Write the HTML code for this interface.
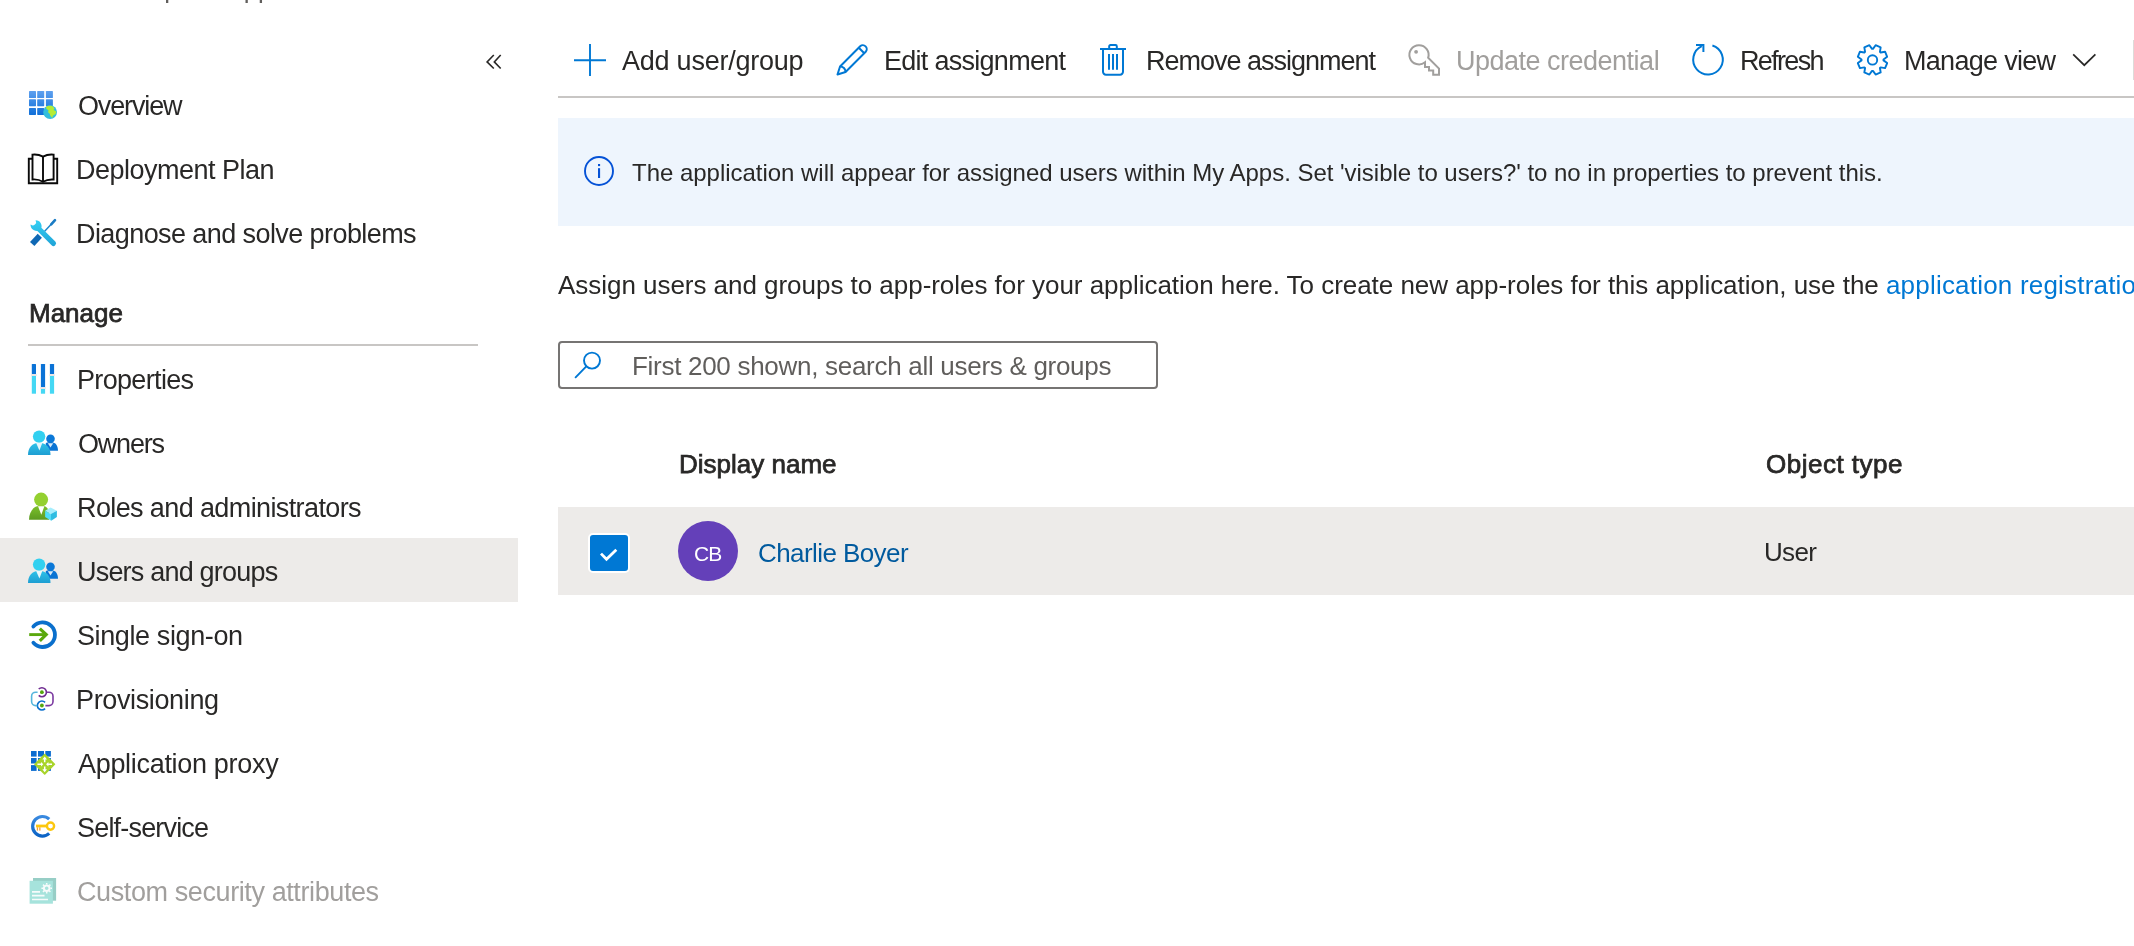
<!DOCTYPE html>
<html><head><meta charset="utf-8">
<style>
html,body{margin:0;padding:0;background:#fff;width:2134px;height:946px;overflow:hidden;position:relative;font-family:"Liberation Sans",sans-serif;color:#292827}
.t{position:absolute;white-space:nowrap;line-height:1;will-change:transform}
.s28{font-size:27px}
.s26{font-size:26px}
.b{font-weight:normal;-webkit-text-stroke:0.75px currentColor}
.ic{position:absolute}
</style></head><body>

<!-- top cut-off title -->
<div class="t s28" id="title" style="left:102px;top:-24px;color:#605e5c;font-size:26px">Enterprise Application</div>

<!-- collapse -->
<svg class="ic" style="left:480px;top:50px" width="30" height="24" viewBox="480 50 30 24"><path d="M493.8 55 L487.1 61.9 L493.8 68.5 M500.7 55 L494.3 61.9 L500.7 68.5" fill="none" stroke="#292827" stroke-width="1.6"/></svg>

<!-- sidebar selection -->
<div style="position:absolute;left:0;top:538px;width:518px;height:64px;background:#edebe9"></div>
<div style="position:absolute;left:28px;top:344px;width:450px;height:2px;background:#c8c6c4"></div>

<div class="t s28" id="n1" style="left:78px;top:93px;letter-spacing:-1.139px">Overview</div>
<div class="t s28" id="n2" style="left:76px;top:157px;letter-spacing:-0.499px">Deployment Plan</div>
<div class="t s28" id="n3" style="left:76px;top:221px;letter-spacing:-0.582px">Diagnose and solve problems</div>
<div class="t s26 b" id="n4" style="left:29px;top:300px;letter-spacing:0.000px">Manage</div>
<div class="t s28" id="n5" style="left:77px;top:367px;letter-spacing:-0.665px">Properties</div>
<div class="t s28" id="n6" style="left:78px;top:431px;letter-spacing:-1.200px">Owners</div>
<div class="t s28" id="n7" style="left:77px;top:495px;letter-spacing:-0.612px">Roles and administrators</div>
<div class="t s28" id="n8" style="left:77px;top:559px;letter-spacing:-0.797px">Users and groups</div>
<div class="t s28" id="n9" style="left:77px;top:623px;letter-spacing:-0.388px">Single sign-on</div>
<div class="t s28" id="n10" style="left:76px;top:687px;letter-spacing:-0.365px">Provisioning</div>
<div class="t s28" id="n11" style="left:78px;top:751px;letter-spacing:-0.310px">Application proxy</div>
<div class="t s28" id="n12" style="left:77px;top:815px;letter-spacing:-0.815px">Self-service</div>
<div class="t s28" id="n13" style="left:77px;top:879px;color:#a19f9d;letter-spacing:-0.400px">Custom security attributes</div>

<!-- toolbar -->
<div class="t s28" id="tb1" style="left:622px;top:48px;letter-spacing:-0.232px">Add user/group</div>
<div class="t s28" id="tb2" style="left:884px;top:48px;letter-spacing:-0.719px">Edit assignment</div>
<div class="t s28" id="tb3" style="left:1146px;top:48px;letter-spacing:-1.005px">Remove assignment</div>
<div class="t s28" id="tb4" style="left:1456px;top:48px;color:#a19f9d;letter-spacing:-0.500px">Update credential</div>
<div class="t s28" id="tb5" style="left:1740px;top:48px;letter-spacing:-1.663px">Refresh</div>
<div class="t s28" id="tb6" style="left:1904px;top:48px;letter-spacing:-0.700px">Manage view</div>
<div style="position:absolute;left:2133px;top:40px;width:1px;height:40px;background:#dddbd9"></div>
<div style="position:absolute;left:558px;top:96px;width:1576px;height:2px;background:#c8c6c4"></div>

<!-- info bar -->
<div style="position:absolute;left:558px;top:118px;width:1576px;height:108px;background:#eef5fd"></div>
<div class="t s26" id="info" style="left:632px;top:161px;font-size:24px;letter-spacing:-0.025px">The application will appear for assigned users within My Apps. Set 'visible to users?' to no in properties to prevent this.</div>

<div class="t s26" id="para" style="left:558px;top:272px;letter-spacing:-0.035px"><span id="para1">Assign users and groups to app-roles for your application here. To create new app-roles for this application, use the</span> <span id="para2" style="color:#0078d4;letter-spacing:0.2px">application registration</span></div>

<!-- search -->
<div style="position:absolute;left:558px;top:341px;width:596px;height:44px;border:2px solid #767473;border-radius:4px"></div>
<div class="t s26" id="search" style="left:632px;top:353px;color:#605e5c;letter-spacing:-0.290px">First 200 shown, search all users &amp; groups</div>

<!-- table -->
<div class="t s26 b" id="h1" style="left:679px;top:451px;letter-spacing:-0.001px">Display name</div>
<div class="t s26 b" id="h2" style="left:1766px;top:451px;letter-spacing:0.500px">Object type</div>
<div style="position:absolute;left:558px;top:507px;width:1576px;height:88px;background:#edebe9"></div>
<div style="position:absolute;left:588px;top:533px;width:38px;height:36px;border:2px solid #fff;border-radius:5px;background:#0078d4"></div>
<div style="position:absolute;left:678px;top:521px;width:60px;height:60px;border-radius:50%;background:#6440b9"></div>
<div class="t" id="cb" style="left:694px;top:543px;font-size:21px;color:#fff;letter-spacing:-1.000px">CB</div>
<div class="t s26" id="name" style="left:758px;top:540px;color:#005a9e;letter-spacing:-0.580px">Charlie Boyer</div>
<div class="t s26" id="user" style="left:1764px;top:539px;letter-spacing:-0.667px">User</div>

<!-- icons -->
<svg class="ic" style="left:570px;top:40px" width="40" height="40" viewBox="570 40 40 40"><path d="M574 60.3H606M590 44V76" stroke="#0078d4" stroke-width="1.9" fill="none"/></svg>
<svg class="ic" style="left:830px;top:40px" width="45" height="40" viewBox="830 40 45 40"><g fill="none" stroke="#0078d4" stroke-width="2" stroke-linejoin="round"><path d="M837.5 74.5 L840.05 66.44 L860.2 46.29 A3.9 3.9 0 0 1 865.71 51.8 L845.56 71.95 Z"/><path d="M858.78 47.7 L864.3 53.22"/><path d="M840.05 66.44 A5.5 5.5 0 0 1 845.56 71.95"/></g></svg>
<svg class="ic" style="left:1095px;top:40px" width="36" height="40" viewBox="1095 40 36 40"><g fill="none" stroke="#0078d4" stroke-width="2"><path d="M1100 49H1126"/><path d="M1109.2 49V46.2A1.2 1.2 0 0 1 1110.4 45H1115.6A1.2 1.2 0 0 1 1116.8 46.2V49"/><path d="M1103 49V71.5A3 3 0 0 0 1106 74.7H1120A3 3 0 0 0 1123 71.5V49"/><path d="M1109 54V69.8M1113 54V69.8M1117 54V69.8"/></g></svg>
<svg class="ic" style="left:1403px;top:40px" width="42" height="40" viewBox="1403 40 42 40"><g fill="none" stroke="#a19f9d" stroke-width="2" stroke-linejoin="miter"><path d="M1428.14 57.74 A9.6 9.6 0 1 0 1425 62.29 L1425 66.9 L1429 66.9 L1429 70.5 L1433.2 70.5 L1433.2 74.8 L1439 74.8 L1439 68.6 Z"/></g><circle cx="1416.1" cy="51.8" r="1.9" fill="#a19f9d"/></svg>
<svg class="ic" style="left:1686px;top:40px" width="42" height="40" viewBox="1686 40 42 40"><g fill="none" stroke="#0078d4" stroke-width="2"><path d="M1712.4 45.5 A14.8 14.8 0 1 1 1701.8 46.2"/><path d="M1696 45H1703.4V52"/></g></svg>
<svg class="ic" style="left:1852px;top:40px" width="42" height="40" viewBox="1852 40 42 40"><g fill="none" stroke="#0078d4" stroke-width="1.9" stroke-linejoin="round"><path d="M1872.98 48.91 L1875.62 45.23 L1880.67 47.32 L1879.93 51.79 L1880.61 52.47 L1885.08 51.73 L1887.17 56.78 L1883.49 59.42 L1883.49 60.38 L1887.17 63.02 L1885.08 68.07 L1880.61 67.33 L1879.93 68.01 L1880.67 72.48 L1875.62 74.57 L1872.98 70.89 L1872.02 70.89 L1869.38 74.57 L1864.33 72.48 L1865.07 68.01 L1864.39 67.33 L1859.92 68.07 L1857.83 63.02 L1861.51 60.38 L1861.51 59.42 L1857.83 56.78 L1859.92 51.73 L1864.39 52.47 L1865.07 51.79 L1864.33 47.32 L1869.38 45.23 L1872.02 48.91 Z"/><circle cx="1872.5" cy="59.9" r="4.7"/></g></svg>
<svg class="ic" style="left:2064px;top:40px" width="40" height="40" viewBox="2064 40 40 40"><path d="M2073.2 54.3 L2084.3 65.2 L2095.4 54.3" fill="none" stroke="#292827" stroke-width="1.7"/></svg>
<svg class="ic" style="left:580px;top:150px" width="40" height="42" viewBox="580 150 40 42"><circle cx="599" cy="171" r="14" fill="none" stroke="#0552d6" stroke-width="1.9"/><rect x="598" y="164" width="2.1" height="2.1" fill="#0552d6"/><rect x="598" y="168.2" width="2.1" height="9.8" fill="#0552d6"/></svg>
<svg class="ic" style="left:570px;top:345px" width="40" height="40" viewBox="570 345 40 40"><g fill="none" stroke="#0078d4" stroke-width="1.9" stroke-linecap="round"><circle cx="592" cy="360.6" r="8"/><path d="M586.3 366.4 L575.6 377.3"/></g></svg>
<svg class="ic" style="left:590px;top:535px" width="40" height="40" viewBox="590 535 40 40"><path d="M601 553.6 L606.5 559.3 L616.3 549.8" fill="none" stroke="#fff" stroke-width="2.8"/></svg>
<svg class="ic" style="left:24px;top:86px" width="38" height="38" viewBox="24 86 38 38"><defs><linearGradient id="gov" gradientUnits="userSpaceOnUse" x1="0" y1="91" x2="0" y2="115"><stop offset="0" stop-color="#5ea0ef"/><stop offset="1" stop-color="#0f6fd8"/></linearGradient></defs><rect x="29" y="91" width="7" height="7" rx="0.6" fill="url(#gov)"/><rect x="29" y="99.2" width="7" height="7" rx="0.6" fill="url(#gov)"/><rect x="29" y="107.9" width="7" height="7" rx="0.6" fill="url(#gov)"/><rect x="37.2" y="91" width="7" height="7" rx="0.6" fill="url(#gov)"/><rect x="37.2" y="99.2" width="7" height="7" rx="0.6" fill="url(#gov)"/><rect x="37.2" y="107.9" width="7" height="7" rx="0.6" fill="url(#gov)"/><rect x="45.9" y="91" width="7" height="7" rx="0.6" fill="url(#gov)"/><rect x="45.9" y="99.2" width="7" height="7" rx="0.6" fill="url(#gov)"/><rect x="45.9" y="107.9" width="7" height="7" rx="0.6" fill="url(#gov)"/><clipPath id="globe"><circle cx="50.1" cy="112.1" r="6.9"/></clipPath><circle cx="50.1" cy="112.1" r="6.9" fill="#32bedd"/><path clip-path="url(#globe)" d="M45.9 106.9 L48.1 105.6 L52.1 105.8 L54.5 108.3 L53.6 110.1 L56.4 111.5 L55.6 114.1 L52.9 115.7 L52.3 117.9 L50.5 115.9 L49.7 113.7 L48.1 112.3 L48.5 110.3 L46.5 109 Z" fill="#b4ec36"/></svg>
<svg class="ic" style="left:24px;top:150px" width="38" height="38" viewBox="24 150 38 38"><g fill="none" stroke="#0a0a0a" stroke-width="1.9"><path d="M32.5 158.8H28.8V183.2H57.2V158.8H53.6"/><path d="M32.5 154.6 C36 154.2 40 155 43 156.6 C46 155 50 154.2 53.6 154.6 V179.5 C50 179.2 46 180 43 181.8 C40 180 36 179.2 32.5 179.5 Z"/><path d="M43 156.6V181.8"/></g></svg>
<svg class="ic" style="left:24px;top:214px" width="38" height="38" viewBox="24 214 38 38"><defs><linearGradient id="gwr" gradientUnits="userSpaceOnUse" x1="0" y1="220" x2="0" y2="247"><stop offset="0" stop-color="#35d0f4"/><stop offset="1" stop-color="#1ea2d6"/></linearGradient></defs><path d="M44.4 231.4 L55.2 220" stroke="#1b86cc" stroke-width="1.5" fill="none"/><path d="M51.2 224.3 L55 220.2" stroke="#1b7cc4" stroke-width="2.6" stroke-linecap="round" fill="none"/><path d="M30 242.1 L37.7 233.7 L41.9 237.8 L34.4 246.1 Z" fill="#0f68b4"/><path d="M35.6 220.2 A3.4 3.4 0 0 1 30.6 224.6 C30.2 227.2 32.6 231.2 37.4 231 L51.6 245.2 A2.55 2.55 0 0 0 55.3 241.6 L41.4 227.8 C42.4 224.8 40.4 220.2 35.6 220.2 Z" fill="url(#gwr)"/></svg>
<svg class="ic" style="left:24px;top:360px" width="38" height="38" viewBox="24 360 38 38"><rect x="31.8" y="364" width="4.2" height="10" rx="0.5" fill="#0a72d6"/><rect x="31.8" y="376" width="4.2" height="17.7" fill="#45d8f4"/><rect x="31.2" y="374" width="5.4" height="2" fill="#eae4e4"/><rect x="40.9" y="364" width="4.2" height="23" rx="0.5" fill="#0a72d6"/><rect x="40.9" y="389" width="4.2" height="4.699999999999999" fill="#45d8f4"/><rect x="40.3" y="387" width="5.4" height="2" fill="#eae4e4"/><rect x="49.9" y="364" width="4.2" height="10" rx="0.5" fill="#0a72d6"/><rect x="49.9" y="376" width="4.2" height="17.7" fill="#45d8f4"/><rect x="49.3" y="374" width="5.4" height="2" fill="#eae4e4"/></svg>
<svg class="ic" style="left:24px;top:425px" width="38" height="38" viewBox="24 425 38 38"><defs><linearGradient id="gp1" gradientUnits="userSpaceOnUse" x1="0" y1="442" x2="0" y2="455"><stop offset="0" stop-color="#30c4ea"/><stop offset="1" stop-color="#1e9ed2"/></linearGradient></defs><path d="M45.8 443 C49 441.6 53 441.6 55.4 443.6 C57.2 445.4 58 448 58 450.8 H45.8 Z" fill="#0a74d4"/><circle cx="50.5" cy="438.7" r="4.3" fill="#0a78d8"/><path d="M47.8 443.2 L53.2 443.2 L50.5 447.6 Z" fill="#d6eaf8"/><path d="M28 454.9 C28 448 32 442.8 39.2 442.8 C46.4 442.8 50.5 448 50.5 454.9 Z" fill="url(#gp1)"/><circle cx="39.1" cy="436.6" r="6.2" fill="#32d0f0"/><path d="M36 442.8 L42.4 442.8 L39.4 450.6 Z" fill="#e8f6fb"/></svg>
<svg class="ic" style="left:24px;top:553px" width="38" height="38" viewBox="24 553 38 38"><defs><linearGradient id="gp2" gradientUnits="userSpaceOnUse" x1="0" y1="570" x2="0" y2="583"><stop offset="0" stop-color="#30c4ea"/><stop offset="1" stop-color="#1e9ed2"/></linearGradient></defs><path d="M45.8 571 C49 569.6 53 569.6 55.4 571.6 C57.2 573.4 58 576 58 578.8 H45.8 Z" fill="#0a74d4"/><circle cx="50.5" cy="566.7" r="4.3" fill="#0a78d8"/><path d="M47.8 571.2 L53.2 571.2 L50.5 575.6 Z" fill="#d6eaf8"/><path d="M28 582.9 C28 576 32 570.8 39.2 570.8 C46.4 570.8 50.5 576 50.5 582.9 Z" fill="url(#gp2)"/><circle cx="39.1" cy="564.6" r="6.2" fill="#32d0f0"/><path d="M36 570.8 L42.4 570.8 L39.4 578.6 Z" fill="#e8f6fb"/></svg>
<svg class="ic" style="left:24px;top:489px" width="38" height="38" viewBox="24 489 38 38"><defs><linearGradient id="grl" gradientUnits="userSpaceOnUse" x1="0" y1="506" x2="0" y2="520"><stop offset="0" stop-color="#7cc02c"/><stop offset="1" stop-color="#5c9a20"/></linearGradient></defs><path d="M29 519.8 C29 512 33.5 506 39 506 H43.2 C47 506 49 510 49 513 V519.8 Z" fill="url(#grl)"/><circle cx="41.1" cy="499.6" r="7" fill="#94d030"/><path d="M38 506.2 L44.4 506.2 L41.3 514.8 Z" fill="#fff"/><path d="M50.6 507.5 L56.9 510.7 L50.8 514 L45.1 510.7 Z" fill="#a6eefd"/><path d="M45.1 510.7 L50.8 514 L51.2 520.7 L45.1 517.1 Z" fill="#50def8"/><path d="M56.9 510.7 L56.9 517.1 L51.2 520.7 L50.8 514 Z" fill="#2fbde2"/></svg>
<svg class="ic" style="left:24px;top:617px" width="38" height="38" viewBox="24 617 38 38"><path d="M33.4 626.6 A12.3 12.3 0 1 1 33.4 642.8" fill="none" stroke="#0a6fcc" stroke-width="3.8" stroke-linecap="round"/><path d="M29.2 634.6 H46" stroke="#5aa80c" stroke-width="2.9" fill="none"/><path d="M39.8 628.6 L46.2 634.6 L39.8 640.8" stroke="#5aa80c" stroke-width="3.2" fill="none"/></svg>
<svg class="ic" style="left:24px;top:681px" width="38" height="38" viewBox="24 681 38 38"><g fill="none" stroke-width="1.6"><path d="M38.72 689.02 A4.5 4.5 0 1 1 38.72 695.38" stroke="#6e2a90"/><path d="M45.08 702.32 A4.5 4.5 0 1 0 45.08 708.68" stroke="#0a6fcc"/><path d="M37.6 692.2 H35.6 C33.4 692.2 31.6 694 31.6 696.2 V701.6 C31.6 703.8 33.4 705.6 35.6 705.6 H37.2" stroke="#55b6dc"/><path d="M46.8 692.2 H49 C51.2 692.2 53 694 53 696.2 V701.6 C53 703.8 51.2 705.6 49 705.6 H45.4" stroke="#7b3aa0"/></g><circle cx="41.9" cy="692.2" r="1.9" fill="#56a60e"/><circle cx="41.9" cy="705.5" r="1.9" fill="#56a60e"/></svg>
<svg class="ic" style="left:24px;top:745px" width="38" height="38" viewBox="24 745 38 38"><rect x="31" y="751" width="5.6" height="5.6" fill="#0a6cd0"/><rect x="31" y="758" width="5.6" height="5.5" fill="#0a6cd0"/><rect x="31" y="765.1" width="5.6" height="5.8" fill="#0a6cd0"/><rect x="38" y="751" width="6" height="5.6" fill="#0a6cd0"/><rect x="38" y="758" width="6" height="5.5" fill="#0a6cd0"/><rect x="38" y="765.1" width="6" height="5.8" fill="#0a6cd0"/><rect x="45.3" y="751" width="5.6" height="5.6" fill="#0a6cd0"/><rect x="45.3" y="758" width="5.6" height="5.5" fill="#0a6cd0"/><rect x="45.3" y="765.1" width="5.6" height="5.8" fill="#0a6cd0"/><path d="M44.7 754.6 L54.4 764.3 L44.7 774 L35 764.3 Z" fill="#a8d42a" stroke="#a8d42a" stroke-width="1.6" stroke-linejoin="round"/><g stroke="#fff" stroke-width="1.5" fill="none"><path d="M44.7 762.2V758.4M44.7 766.4V770.2M37.4 764.3H41.6M52 764.3H47.8"/></g><path d="M44.7 756.4 L42.4 759.4 H47 Z M44.7 772.2 L42.4 769.2 H47 Z M43.3 764.3 L41 762 V766.6 Z M46.1 764.3 L48.4 762 V766.6 Z" fill="#fff"/></svg>
<svg class="ic" style="left:24px;top:809px" width="38" height="38" viewBox="24 809 38 38"><defs><linearGradient id="gss" gradientUnits="userSpaceOnUse" x1="0" y1="816" x2="0" y2="837"><stop offset="0" stop-color="#3a8ae0"/><stop offset="1" stop-color="#0a62c4"/></linearGradient></defs><path d="M49.2 819.2 A9.8 9.8 0 1 0 49.2 833.4" fill="none" stroke="url(#gss)" stroke-width="3.2"/><rect x="36" y="824.6" width="11" height="2.8" fill="#fcc70e"/><circle cx="50.5" cy="826.1" r="3.6" fill="none" stroke="#fcc70e" stroke-width="2.4"/><rect x="36.8" y="827.3" width="1.3" height="3.3" fill="#f5a030"/><rect x="39.2" y="827.3" width="1.3" height="3.3" fill="#f5a030"/></svg>
<svg class="ic" style="left:24px;top:873px" width="38" height="38" viewBox="24 873 38 38"><rect x="33" y="878" width="23.1" height="22.7" fill="#97cec6"/><rect x="29.6" y="880.8" width="23.3" height="22.9" fill="#a6e3dc"/><g fill="none" stroke="#f6fbfb" stroke-width="1.7"><path d="M32 891.9H40M32 895.7H44.5M32 899.5H48"/><circle cx="46.7" cy="888.3" r="2.8" stroke-width="2"/></g><path d="M46.7 883 V884.6 M46.7 892 V893.6 M41.4 888.3 H43 M50.4 888.3 H52 M43 884.6 L44.1 885.7 M49.3 890.9 L50.4 892 M43 892 L44.1 890.9 M49.3 885.7 L50.4 884.6" stroke="#f6fbfb" stroke-width="1.5"/></svg>
</body></html>
